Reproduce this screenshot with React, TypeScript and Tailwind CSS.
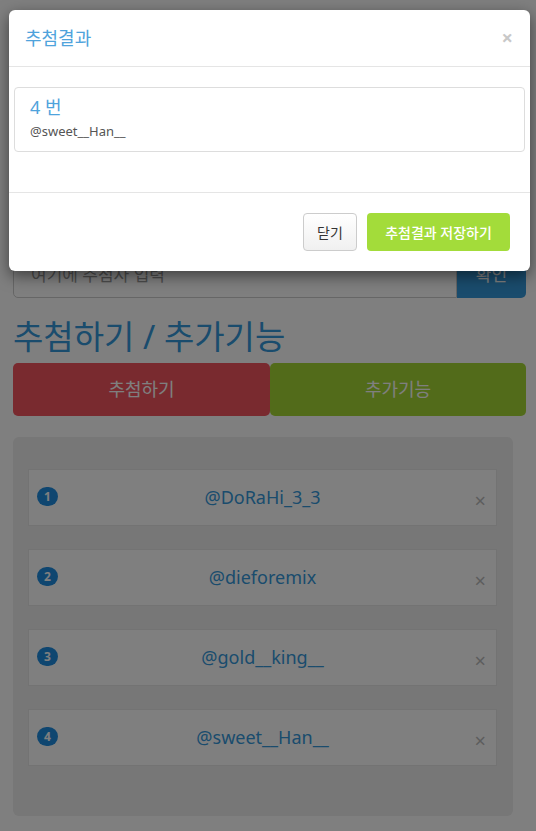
import React from "react";

const font = { fontFamily: '"Noto Sans", "Noto Sans CJK KR", sans-serif' };

const items = ["@DoRaHi_3_3", "@dieforemix", "@gold__king__", "@sweet__Han__"];

export default function App() {
  return (
    <div className="relative w-[536px] h-[831px] overflow-hidden bg-white" style={font}>
      {/* Page content */}
      <div className="px-[13px] pt-[252px]">
        <div className="flex h-[46px] w-[513px]">
          <div className="flex-1 flex items-center border border-[#cccccc] rounded-l-[5px] pl-[17px] text-[17px] text-[#999999]">
            여기에 추첨자 입력
          </div>
          <div className="w-[69px] flex items-center justify-center bg-[#3498db] rounded-r-[5px] text-white text-[17px]">
            확인
          </div>
        </div>
        <h2 className="mt-[20px] text-[33px] leading-[38px] text-[#3498db]">추첨하기 / 추가기능</h2>
        <div className="mt-[7px] flex w-[513px] h-[53px]">
          <div className="w-[257px] flex items-center justify-center bg-[#f2545f] rounded-[5px] text-white text-[18px]">
            추첨하기
          </div>
          <div className="flex-1 flex items-center justify-center bg-[#a4d634] rounded-[5px] text-white text-[18px]">
            추가기능
          </div>
        </div>
        <div className="mt-[21px] w-[500px] h-[379px] bg-[#eeeeee] rounded-[6px] pt-[32px] pl-[15px] pr-[16px] flex flex-col gap-[23px]">
          {items.map((name, i) => (
            <div
              key={name}
              className="relative h-[57px] bg-white border border-[#e6e6e6] flex items-center justify-center"
            >
              <span className="absolute left-[8px] top-[17px] w-[21px] h-[19px] rounded-full bg-[#1f8de0] text-white text-[12px] font-bold flex items-center justify-center leading-none">
                {i + 1}
              </span>
              <span className="text-[18px] text-[#3498db]">{name}</span>
              <span className="absolute right-[10px] top-[21px] text-[#bbbbbb] text-[20px] leading-none">×</span>
            </div>
          ))}
        </div>
      </div>

      {/* Backdrop */}
      <div className="absolute inset-0 bg-black/50" />

      {/* Modal */}
      <div className="absolute left-[9px] top-[10px] w-[521px] bg-white rounded-[6px] shadow-[0_5px_15px_rgba(0,0,0,0.5)]">
        <div className="h-[57px] border-b border-[#e5e5e5] flex items-center justify-between pl-[16px] pr-[17px]">
          <span className="text-[18px] text-[#4fa3dc]">추첨결과</span>
          <span className="text-[#c8c8c8] text-[20px] leading-none font-bold">×</span>
        </div>
        <div className="pt-[20px] pb-[40px] px-[5px]">
          <div className="border border-[#dddddd] rounded-[4px] h-[65px] pl-[15px] pt-[7px]">
            <div className="text-[18px] leading-[24px] text-[#4fa3dc]">4 번</div>
            <div className="mt-[3px] text-[13px] leading-[18px] text-[#555555]">@sweet__Han__</div>
          </div>
        </div>
        <div className="border-t border-[#e5e5e5] h-[79px] flex items-center justify-end gap-[10px] pr-[20px]">
          <div className="w-[54px] h-[38px] border border-[#cccccc] rounded-[4px] bg-gradient-to-b from-white to-[#f0f0f0] flex items-center justify-center text-[14px] text-[#333333]">
            닫기
          </div>
          <div className="w-[143px] h-[38px] rounded-[4px] bg-[#a3dc3a] flex items-center justify-center text-[14px] font-medium text-white">
            추첨결과 저장하기
          </div>
        </div>
      </div>
    </div>
  );
}
